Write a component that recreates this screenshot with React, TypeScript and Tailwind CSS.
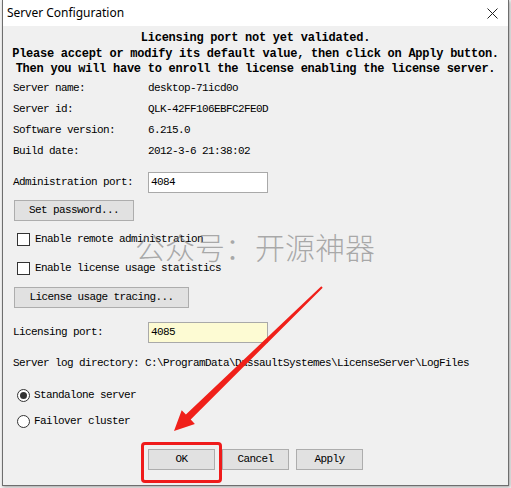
const mono = "font-['Liberation_Mono',monospace] text-[11px] tracking-[-0.6px] text-black"

const Field = ({ label, value }: { label: string; value: string }) => (
  <div className="flex h-[21px] items-center">
    <span className="w-[135px] shrink-0">{label}</span>
    <span>{value}</span>
  </div>
)

const Btn = ({ label, w }: { label: string; w: string }) => (
  <div className={`flex h-[21px] ${w} items-center justify-center border border-[#adadad] bg-[#e1e1e1]`}>
    {label}
  </div>
)

export default function App() {
  return (
    <div className={`relative h-[488px] w-[511px] overflow-hidden bg-[#f4f4f4] ${mono}`}>
      <div className="ml-[2px] h-[486px] w-[507px] border-x border-b border-[#6e6e6e] bg-[#f0f0f0] shadow-[1px_1px_3px_rgba(0,0,0,0.35)]">
        {/* title bar */}
        <div className="flex h-[26px] items-center justify-between bg-white pl-[4px] pr-[10px]">
          <span className="font-['Noto_Sans',sans-serif] text-[12px] tracking-normal">Server Configuration</span>
          <svg width="11" height="11" viewBox="0 0 11 11">
            <path d="M0.5 0.5L10.5 10.5M10.5 0.5L0.5 10.5" stroke="#222" strokeWidth="1" />
          </svg>
        </div>

        <div className="mt-[5px] text-center text-[12px] font-bold leading-[15.5px] tracking-[-0.25px]">
          <div>Licensing port not yet validated.</div>
          <div>Please accept or modify its default value, then click on Apply button.</div>
          <div>Then you will have to enroll the license enabling the license server.</div>
        </div>

        <div className="pl-[10px]">
          <Field label="Server name:" value="desktop-71icd0o" />
          <Field label="Server id:" value="QLK-42FF106EBFC2FE0D" />
          <Field label="Software version:" value="6.215.0" />
          <Field label="Build date:" value="2012-3-6 21:38:02" />

          <div className="mt-[10px] flex h-[21px] items-center">
            <span className="w-[135px] shrink-0">Administration port:</span>
            <div className="flex h-[21px] w-[120px] items-center border border-[#a9a9a9] bg-white pl-[2px]">4084</div>
          </div>

          <div className="ml-[1px] mt-[7px]">
            <Btn label="Set password..." w="w-[120px]" />
          </div>

          <div className="mt-[9px] flex h-[20px] items-center pl-[4px]">
            <span className="mr-[5px] h-[13px] w-[13px] border border-[#333] bg-white" />
            Enable remote administration
          </div>
          <div className="mt-[9px] flex h-[20px] items-center pl-[4px]">
            <span className="mr-[5px] h-[13px] w-[13px] border border-[#333] bg-white" />
            Enable license usage statistics
          </div>

          <div className="ml-[1px] mt-[8px]">
            <Btn label="License usage tracing..." w="w-[175px]" />
          </div>

          <div className="mt-[14px] flex h-[21px] items-center">
            <span className="w-[135px] shrink-0">Licensing port:</span>
            <div className="flex h-[21px] w-[120px] items-center border border-[#a9a9a9] bg-[#fdfbd3] pl-[2px]">4085</div>
          </div>

          <div className="mt-[11px] flex h-[20px] items-center">
            Server log directory: C:\ProgramData\DassaultSystemes\LicenseServer\LogFiles
          </div>

          <div className="mt-[12px] flex h-[20px] items-center pl-[4px]">
            <span className="mr-[4px] flex h-[13px] w-[13px] items-center justify-center rounded-full border border-[#333] bg-white">
              <span className="h-[7px] w-[7px] rounded-full bg-[#333]" />
            </span>
            Standalone server
          </div>
          <div className="mt-[6px] flex h-[20px] items-center pl-[4px]">
            <span className="mr-[4px] h-[13px] w-[13px] rounded-full border border-[#333] bg-white" />
            Failover cluster
          </div>
        </div>

        <div className="mt-[17px] flex gap-[7px] pl-[145px]">
          <Btn label="OK" w="w-[67px]" />
          <Btn label="Cancel" w="w-[67px]" />
          <Btn label="Apply" w="w-[67px]" />
        </div>
      </div>

      {/* watermark */}
      <div className="pointer-events-none absolute left-[135px] top-[231px] font-['Noto_Sans_CJK_SC',sans-serif] text-[30px] font-light leading-[30px] tracking-normal text-[rgba(120,120,120,0.6)]">
        公众号：开源神器
      </div>

      {/* annotation */}
      <svg className="pointer-events-none absolute left-0 top-0" width="511" height="488">
        <polygon
          points="174,431 194.9,423.9 190.7,419.6 322.7,287.7 321.3,286.3 185.9,414.6 181.7,410.3"
          fill="#f0201a"
        />
      </svg>
      <div className="pointer-events-none absolute left-[141px] top-[442px] h-[41px] w-[81px] rounded-[4px] border-[3px] border-[#ef1b1b]" />
    </div>
  )
}
